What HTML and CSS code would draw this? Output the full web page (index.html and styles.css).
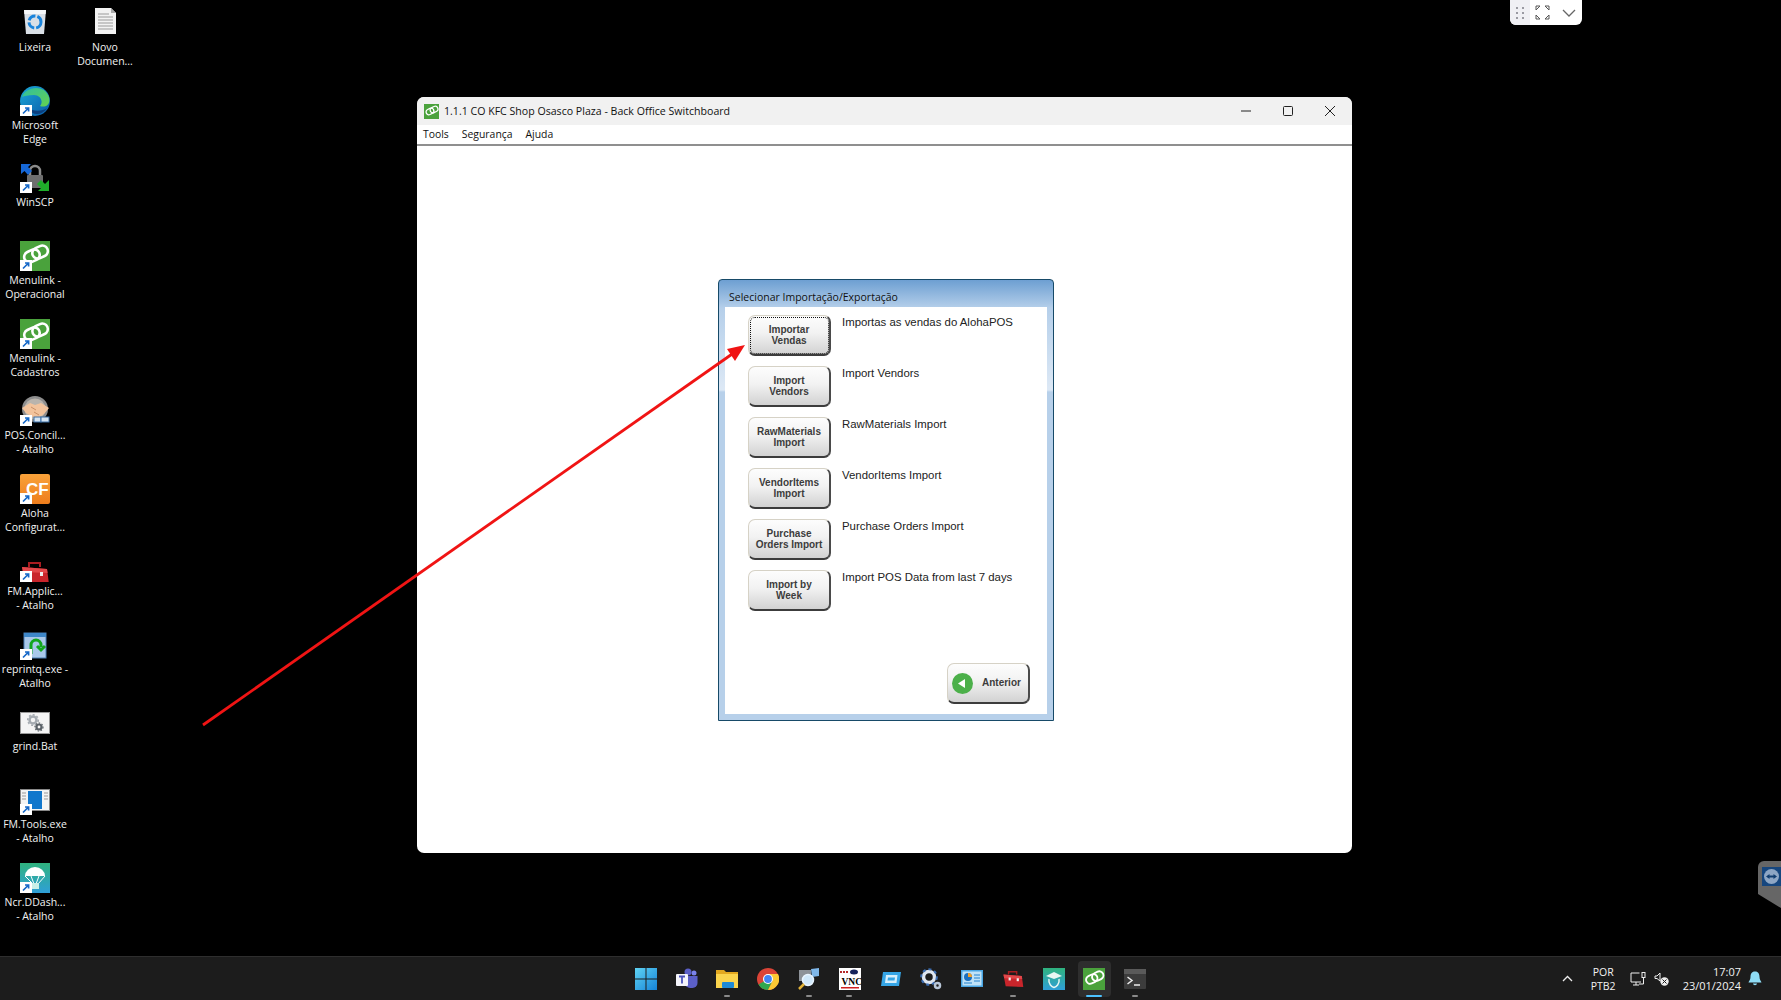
FILE: index.html
```html
<!DOCTYPE html>
<html lang="pt-BR">
<head>
    <meta charset="UTF-8">
    <title>Back Office Switchboard</title>
    <link rel="stylesheet" href="styles.css">
</head>
<body>
    <svg class="defs" width="0" height="0">
        <defs>
            <linearGradient id="edgeBlue" x1="0" y1="0" x2="1" y2="1"><stop offset="0" stop-color="#1aa7d8"/><stop offset="1" stop-color="#0a5aa8"/></linearGradient>
            <linearGradient id="edgeGreen" x1="0" y1="0" x2="1" y2="1"><stop offset="0" stop-color="#2fbfa0"/><stop offset="1" stop-color="#66d24e"/></linearGradient>
            <linearGradient id="cfOrange" x1="0" y1="0" x2="0" y2="1"><stop offset="0" stop-color="#f9a23a"/><stop offset="1" stop-color="#ee7d1c"/></linearGradient>
            <linearGradient id="tealBlue" x1="0" y1="0" x2="0" y2="1"><stop offset="0" stop-color="#2fb37e"/><stop offset="1" stop-color="#2f9fd8"/></linearGradient>
            <linearGradient id="startBlue" x1="0" y1="0" x2="1" y2="1"><stop offset="0" stop-color="#5fd3f3"/><stop offset="1" stop-color="#1583d8"/></linearGradient>

            <symbol id="badge" viewBox="0 0 30 30">
                <rect x="0" y="19" width="12" height="11" fill="#fff"/>
                <path d="M3 27.5 L8 22.5 M5 22 H8.6 V25.6" fill="none" stroke="#1668c8" stroke-width="1.7"/>
            </symbol>
            <symbol id="ring-link" viewBox="0 0 30 30">
                <rect width="30" height="30" fill="#4aa23c"/>
                <g fill="none" stroke="#fff" stroke-width="2.6" transform="rotate(-25 16 13)">
                    <rect x="3.500" y="7.500" width="16" height="11" rx="5.500"/>
                    <rect x="12.500" y="7.500" width="16" height="11" rx="5.500"/>
                </g>
            </symbol>
            <symbol id="toolbox" viewBox="0 0 30 30">
                <path d="M9 9 V5 H20 V9" fill="none" stroke="#a81c20" stroke-width="2"/>
                <path d="M2 9 L27 11 L29 26 L5 25 Z" fill="#c9252b"/>
                <path d="M2 9 L27 11 L27.6 15 L3 14 Z" fill="#e2474a"/>
                <rect x="9" y="13" width="3" height="4" fill="#eee"/>
                <rect x="20" y="14" width="3" height="4" fill="#eee"/>
            </symbol>
        </defs>
    </svg>

    <div class="desktop">
        <div class="icon-grid">
            <div class="shortcut">
                <svg class="shortcut-img" viewBox="0 0 30 30">
                    <path d="M4 2 H26 L24 26 H6 Z" fill="#d9dfe6"/>
                    <path d="M4 2 H26 L25.6 6 H4.4 Z" fill="#f5f7f9"/>
                    <circle cx="15" cy="14" r="6" fill="none" stroke="#1a84dc" stroke-width="3" stroke-dasharray="8 2"/>
                </svg>
                <span>Lixeira</span>
            </div>
            <div class="shortcut second-col">
                <svg class="shortcut-img" viewBox="0 0 30 30">
                    <path d="M5 0 H21 L26 5 V26 H5 Z" fill="#f2f2f2"/>
                    <path d="M21 0 V5 H26 Z" fill="#aaa"/>
                    <path d="M8 6 H19 M8 9 H23 M8 12 H23 M8 15 H23 M8 18 H23 M8 21 H23" stroke="#9a9a9a" stroke-width="1"/>
                </svg>
                <span>Novo<br>Documen...</span>
            </div>
            <div class="shortcut">
                <svg class="shortcut-img" viewBox="0 0 30 30">
                    <circle cx="15" cy="15" r="15" fill="url(#edgeBlue)"/>
                    <path d="M2 11 C5 1 24 -3 29 11 C31 19 25 22 20 20 C24 15 20 9 14 9 C8 9 4 10 2 11 Z" fill="url(#edgeGreen)"/>
                    <path d="M8 22 C12 25 22 26 27 22 C22 30 12 30 8 22 Z" fill="#0c3f7d"/>
                    <use href="#badge" width="30" height="30"/>
                </svg>
                <span>Microsoft<br>Edge</span>
            </div>
            <div class="shortcut">
                <svg class="shortcut-img" viewBox="0 0 30 30">
                    <path d="M10 13 V8 a5 5 0 0 1 10 0 V13" fill="none" stroke="#8b8b8b" stroke-width="2.5"/>
                    <rect x="7" y="12" width="16" height="13" rx="1" fill="#6e6e6e"/>
                    <path d="M1 11 V1 H11 L8 4 L12 8 L8 12 L4.500 8 Z" fill="#1668d8"/>
                    <path d="M29 17 V28 H18 L21 25 L17 21 L21 17 L25 21 Z" fill="#1fae2a"/>
                    <use href="#badge" width="30" height="30"/>
                </svg>
                <span>WinSCP</span>
            </div>
            <div class="shortcut">
                <svg class="shortcut-img" viewBox="0 0 30 30"><use href="#ring-link" width="30" height="30"/><use href="#badge" width="30" height="30"/></svg>
                <span>Menulink -<br>Operacional</span>
            </div>
            <div class="shortcut">
                <svg class="shortcut-img" viewBox="0 0 30 30"><use href="#ring-link" width="30" height="30"/><use href="#badge" width="30" height="30"/></svg>
                <span>Menulink -<br>Cadastros</span>
            </div>
            <div class="shortcut">
                <svg class="shortcut-img" viewBox="0 0 30 30">
                    <circle cx="15" cy="13" r="13" fill="#8d8d8d"/>
                    <circle cx="15" cy="13" r="10.500" fill="#b9b4ad"/>
                    <path d="M2 12 L10 7 L15 9 L21 7 L29 12 L24 18 L17 23 L13 21 L6 17 Z" fill="#f2c39c"/>
                    <path d="M11 11 L16 14 M14 16 L19 19" stroke="#c98f66" stroke-width="1"/>
                    <rect x="14" y="21" width="7" height="5" fill="#d5e4f2" stroke="#3a6ea5"/>
                    <rect x="21" y="21" width="8" height="5" fill="#d5e4f2" stroke="#3a6ea5"/>
                    <use href="#badge" width="30" height="30"/>
                </svg>
                <span>POS.Concil...<br>- Atalho</span>
            </div>
            <div class="shortcut">
                <svg class="shortcut-img" viewBox="0 0 30 30">
                    <rect width="30" height="30" rx="2" fill="url(#cfOrange)"/>
                    <text class="cf-text" x="6" y="21">CF</text>
                    <use href="#badge" width="30" height="30"/>
                </svg>
                <span>Aloha<br>Configurat...</span>
            </div>
            <div class="shortcut">
                <svg class="shortcut-img" viewBox="0 0 30 30">
                    <use href="#toolbox" y="6" width="30" height="30"/>
                    <rect x="0" y="19" width="12" height="11" fill="#000"/>
                    <use href="#badge" width="30" height="30"/>
                </svg>
                <span>FM.Applic...<br>- Atalho</span>
            </div>
            <div class="shortcut">
                <svg class="shortcut-img" viewBox="0 0 30 30">
                    <rect x="4" y="3" width="22" height="25" fill="#a9c8ea" stroke="#4a7fb5"/>
                    <rect x="4" y="3" width="22" height="4" fill="#3e87c9"/>
                    <path d="M11 24 V15 a5 5 0 0 1 10 0 V17 M17 16 L21 20 L25 16" fill="none" stroke="#13a61f" stroke-width="3"/>
                    <use href="#badge" width="30" height="30"/>
                </svg>
                <span>reprintq.exe -<br>Atalho</span>
            </div>
            <div class="shortcut">
                <svg class="shortcut-img" viewBox="0 0 30 30">
                    <rect x="0.500" y="5.500" width="29" height="21" fill="#f4f4f4" stroke="#999"/>
                    <circle cx="13" cy="13" r="3.500" fill="none" stroke="#a5abb1" stroke-width="2.500"/>
                    <circle cx="13" cy="13" r="5.300" fill="none" stroke="#a5abb1" stroke-width="1.500" stroke-dasharray="2 2"/>
                    <circle cx="19" cy="20" r="2.500" fill="none" stroke="#5b6268" stroke-width="2.200"/>
                    <circle cx="19" cy="20" r="4" fill="none" stroke="#5b6268" stroke-width="1.200" stroke-dasharray="1.500 1.500"/>
                </svg>
                <span>grind.Bat</span>
            </div>
            <div class="shortcut">
                <svg class="shortcut-img" viewBox="0 0 30 30">
                    <rect x="0.500" y="4.500" width="29" height="21" fill="#f4f4f4" stroke="#888"/>
                    <rect x="8" y="6" width="14" height="18" fill="#1177cc"/>
                    <path d="M2 8 H6 M2 11 H6 M2 14 H6 M24 8 H28 M24 11 H28 M24 14 H28" stroke="#999"/>
                    <use href="#badge" width="30" height="30"/>
                </svg>
                <span>FM.Tools.exe<br>- Atalho</span>
            </div>
            <div class="shortcut">
                <svg class="shortcut-img" viewBox="0 0 30 30">
                    <rect width="30" height="30" fill="url(#tealBlue)"/>
                    <path d="M5 13 a10 9 0 0 1 20 0 Z" fill="#fff"/>
                    <path d="M5 13 L13 21 M25 13 L18 21 M11 13 L14 21 M19 13 L16 21" stroke="#fff"/>
                    <rect x="12" y="20" width="7" height="6" fill="#c9f0e8"/>
                    <use href="#badge" width="30" height="30"/>
                </svg>
                <span>Ncr.DDash...<br>- Atalho</span>
            </div>
        </div>

        <div class="window">
            <div class="title-bar">
                <svg class="app-icon" viewBox="0 0 30 30"><use href="#ring-link" width="30" height="30"/></svg>
                <span class="title-text">1.1.1 CO KFC Shop Osasco Plaza - Back Office Switchboard</span>
                <div class="win-controls">
                    <svg width="42" height="14" viewBox="0 0 42 14"><path d="M16 7 H26" stroke="#222"/></svg>
                    <svg width="42" height="14" viewBox="0 0 42 14"><rect x="16.500" y="2.500" width="9" height="9" rx="1" fill="none" stroke="#222"/></svg>
                    <svg width="42" height="14" viewBox="0 0 42 14"><path d="M16 2 L26 12 M26 2 L16 12" stroke="#222"/></svg>
                </div>
            </div>
            <div class="menu-bar">
                <span>Tools</span>
                <span>Segurança</span>
                <span>Ajuda</span>
            </div>
            <div class="client">
                <div class="panel">
                    <div class="panel-title">Selecionar Importação/Exportação</div>
                    <div class="panel-body">
                        <div class="rows">
                            <div class="row">
                                <button class="btn btn-focus">Importar<br>Vendas</button>
                                <span class="row-label">Importas as vendas do AlohaPOS</span>
                            </div>
                            <div class="row">
                                <button class="btn">Import<br>Vendors</button>
                                <span class="row-label">Import Vendors</span>
                            </div>
                            <div class="row">
                                <button class="btn">RawMaterials<br>Import</button>
                                <span class="row-label">RawMaterials Import</span>
                            </div>
                            <div class="row">
                                <button class="btn">VendorItems<br>Import</button>
                                <span class="row-label">VendorItems Import</span>
                            </div>
                            <div class="row">
                                <button class="btn">Purchase<br>Orders Import</button>
                                <span class="row-label">Purchase Orders Import</span>
                            </div>
                            <div class="row">
                                <button class="btn">Import by<br>Week</button>
                                <span class="row-label">Import POS Data from last 7 days</span>
                            </div>
                        </div>
                        <div class="panel-footer">
                            <button class="btn btn-back">
                                <svg width="21" height="21" viewBox="0 0 21 21"><circle cx="10.500" cy="10.500" r="10.500" fill="#4cb04a"/><path d="M6 10.500 L13 6 V15 Z" fill="#fff"/></svg>
                                <span>Anterior</span>
                            </button>
                        </div>
                    </div>
                </div>
            </div>
        </div>

        <div class="remote-pill">
            <div class="pill-grip">
                <svg width="10" height="14" viewBox="0 0 10 14"><path d="M1 1 h2 v2 h-2 Z M7 1 h2 v2 h-2 Z M1 6 h2 v2 h-2 Z M7 6 h2 v2 h-2 Z M1 11 h2 v2 h-2 Z M7 11 h2 v2 h-2 Z" fill="#9a9aa2"/></svg>
            </div>
            <svg width="15" height="15" viewBox="0 0 15 15"><path d="M1 5 V1 H5 L1 5 M14 5 V1 H10 L14 5 M1 10 V14 H5 L1 10 M14 10 V14 H10 L14 10" fill="none" stroke="#555"/></svg>
            <svg class="pill-chevron" width="14" height="8" viewBox="0 0 14 8"><path d="M1 1 L7 7 L13 1" fill="none" stroke="#666" stroke-width="1.300"/></svg>
        </div>

        <div class="tv-tab">
            <svg width="19" height="19" viewBox="0 0 19 19">
                <rect width="19" height="19" fill="#16467e"/>
                <circle cx="9.500" cy="9.500" r="7.500" fill="#8ea6c4"/>
                <path d="M4 9.500 L7.500 7 V8.500 H11.500 V7 L15 9.500 L11.500 12 V10.500 H7.500 V12 Z" fill="#123e70"/>
            </svg>
        </div>
    </div>

    <div class="taskbar">
        <div class="task-side"></div>
        <div class="task-apps">
            <div class="task-item">
                <svg class="task-icon" viewBox="0 0 22 22"><path d="M0 0 H10.500 V10.500 H0 Z M11.500 0 H22 V10.500 H11.500 Z M0 11.500 H10.500 V22 H0 Z M11.500 11.500 H22 V22 H11.500 Z" fill="url(#startBlue)"/></svg>
            </div>
            <div class="task-item">
                <svg class="task-icon" viewBox="0 0 22 22">
                    <circle cx="18" cy="5" r="2.500" fill="#7b83eb"/><circle cx="12" cy="4" r="3.500" fill="#5b5fc7"/>
                    <path d="M9 8 H21.500 V15 a5 5 0 0 1 -5 5 H14 a5 5 0 0 1 -5 -5 Z" fill="#5b5fc7"/>
                    <rect x="0" y="6" width="12" height="12" rx="1" fill="#f4f4fa"/>
                    <path d="M3 8.500 H9 M6 8.500 V15.500" stroke="#4b53bc" stroke-width="1.800"/>
                </svg>
            </div>
            <div class="task-item is-open">
                <svg class="task-icon" viewBox="0 0 22 22">
                    <path d="M0 2 H8 L10 4 H22 V20 H0 Z" fill="#e3a81f"/>
                    <path d="M0 6 H22 V20 H0 Z" fill="#fbd44d"/>
                    <rect x="6" y="14" width="12" height="6" rx="1" fill="#1e8ad6"/>
                </svg>
            </div>
            <div class="task-item">
                <svg class="task-icon" viewBox="0 0 22 22">
                    <circle cx="11" cy="11" r="11" fill="#db4437"/>
                    <path d="M11 11 L1.500 16.500 A11 11 0 0 0 11 22 L16.500 11 Z" fill="#2fa84f"/>
                    <path d="M11 6 H21 A11 11 0 0 1 11 22 L15.500 13 Z" fill="#fcc934"/>
                    <circle cx="11" cy="11" r="5" fill="#fff"/><circle cx="11" cy="11" r="3.900" fill="#4285f4"/>
                </svg>
            </div>
            <div class="task-item is-open">
                <svg class="task-icon" viewBox="0 0 22 22">
                    <rect x="1" y="2" width="12" height="11" fill="#8d9299"/>
                    <path d="M13 1 L21 0 V8 L14 9 Z" fill="#7fb8ea"/>
                    <circle cx="10" cy="12" r="5.500" fill="#cfe8fb" stroke="#e8f4ff" stroke-width="1.500"/>
                    <path d="M6 16 L1 21" stroke="#e2b33a" stroke-width="2.500"/>
                </svg>
            </div>
            <div class="task-item is-open">
                <svg class="task-icon" viewBox="0 0 22 22">
                    <rect width="22" height="22" fill="#fff"/>
                    <ellipse cx="15" cy="4" rx="4" ry="2.500" fill="#16245c"/>
                    <path d="M1 4 H10" stroke="#b52a2a" stroke-width="2" stroke-dasharray="2 1"/>
                    <text class="vnc-text" x="2.500" y="17">VNC</text>
                    <rect x="2" y="19" width="18" height="1.500" fill="#d02020"/>
                </svg>
            </div>
            <div class="task-item">
                <svg class="task-icon" viewBox="0 0 22 22">
                    <path d="M3 4 H21 L19 18 H1 Z" fill="#35a5e6"/>
                    <path d="M6 7 H17.500 L16.500 15 H5 Z" fill="#d6effc"/>
                    <path d="M8 9.500 H15 L14.500 12.500 H7.500 Z" fill="#35a5e6"/>
                </svg>
            </div>
            <div class="task-item">
                <svg class="task-icon" viewBox="0 0 22 22">
                    <circle cx="9" cy="9" r="5.500" fill="none" stroke="#dfe6f0" stroke-width="3.500"/>
                    <circle cx="9" cy="9" r="7.800" fill="none" stroke="#3d6fb5" stroke-width="2" stroke-dasharray="3 3"/>
                    <circle cx="17.500" cy="17.500" r="2.500" fill="none" stroke="#b9c7d8" stroke-width="2.500"/>
                </svg>
            </div>
            <div class="task-item">
                <svg class="task-icon" viewBox="0 0 22 22">
                    <rect y="2" width="22" height="17" fill="#49a6e4"/>
                    <rect x="1.500" y="3.500" width="19" height="14" fill="#bfe2f7"/>
                    <circle cx="7" cy="9" r="4" fill="#1b6fbe"/>
                    <path d="M7 9 V5 A4 4 0 0 1 11 9 Z" fill="#f3a02a"/>
                    <path d="M3 15 H11 M13 7 H19 M13 10 H19 M13 13 H19" stroke="#2280cc"/>
                </svg>
            </div>
            <div class="task-item is-open">
                <svg class="task-icon" viewBox="0 0 30 30"><use href="#toolbox" width="30" height="30"/></svg>
            </div>
            <div class="task-item">
                <svg class="task-icon" viewBox="0 0 22 22">
                    <rect width="22" height="22" fill="url(#tealBlue)"/>
                    <path d="M3 8 L11 4 L19 8 L11 11 Z" fill="#e8f7f2"/>
                    <path d="M6 11 C5 16 9 19 11 19.500 C13 19 17 16 16 11" fill="none" stroke="#e8f7f2" stroke-width="1.500"/>
                </svg>
            </div>
            <div class="task-item is-active">
                <svg class="task-icon" viewBox="0 0 30 30"><use href="#ring-link" width="30" height="30"/></svg>
            </div>
            <div class="task-item is-open">
                <svg class="task-icon" viewBox="0 0 22 22">
                    <rect y="1" width="22" height="20" rx="1" fill="#3c3c3c"/>
                    <rect y="1" width="22" height="5" fill="#5a5a5a"/>
                    <path d="M3.500 9 L8 12.500 L3.500 16" fill="none" stroke="#eee" stroke-width="1.500"/>
                    <path d="M10 17 H16" stroke="#eee" stroke-width="1.500"/>
                </svg>
            </div>
        </div>
        <div class="task-side task-tray">
            <svg class="tray-chevron" width="11" height="7" viewBox="0 0 11 7"><path d="M1 6 L5.500 1.500 L10 6" fill="none" stroke="#eee" stroke-width="1.300"/></svg>
            <div class="tray-lang">POR<br>PTB2</div>
            <svg class="tray-net" width="16" height="16" viewBox="0 0 16 16"><path d="M9.500 2 H1 V11 H11 M3 14 H9 M6 11 V14" fill="none" stroke="#eee"/><rect x="12" y="1.500" width="3" height="5" fill="none" stroke="#eee"/><path d="M13.500 7 V13 H9" fill="none" stroke="#eee"/></svg>
            <svg class="tray-sound" width="15" height="14" viewBox="0 0 15 14"><path d="M1 4 H3 L6 1 V9 L3 6.500 H1 Z" fill="none" stroke="#eee"/><circle cx="10.500" cy="9.500" r="4.200" fill="#eee"/><path d="M8.500 7.500 L12.500 11.500 M12.500 7.500 L8.500 11.500" stroke="#1c1c1c"/></svg>
            <div class="tray-clock">17:07<br>23/01/2024</div>
            <svg class="tray-bell" width="14" height="15" viewBox="0 0 14 15"><path d="M7 0.500 C3.500 0.500 2.500 3 2.500 6 C2.500 8.500 1 10 0.500 11.500 H13.500 C13 10 11.500 8.500 11.500 6 C11.500 3 10.500 0.500 7 0.500 Z M5 12.500 H9 C8.800 14.800 5.200 14.800 5 12.500 Z" fill="#8fdcf5"/></svg>
        </div>
    </div>

    <svg class="arrow" viewBox="0 0 1781 1000">
        <path d="M203 725 L735 352" stroke="#f01414" stroke-width="2.800"/>
        <path d="M745 345 L735 361 L727 349 Z" fill="#f01414"/>
    </svg>
</body>
</html>
```

FILE: styles.css
```css
html, body {
    margin: 0;
    padding: 0;
    height: 100%;
}
body {
    position: relative;
    width: 1781px;
    height: 1000px;
    overflow: hidden;
    background: #000;
    display: flex;
    flex-direction: column;
    font-family: "Open Sans", "Noto Sans", sans-serif;
}
.defs {
    position: absolute;
}
.desktop {
    position: relative;
    flex: 1;
}
.arrow {
    position: absolute;
    left: 0;
    top: 0;
    width: 1781px;
    height: 1000px;
    pointer-events: none;
}

/* desktop shortcuts */
.icon-grid {
    display: grid;
    grid-template-rows: repeat(12, 77.7px);
    grid-template-columns: 70px 70px;
    grid-auto-flow: column;
    padding-top: 8px;
}
.shortcut {
    display: flex;
    flex-direction: column;
    align-items: center;
    color: #f2f2f2;
    font-size: 10.5px;
    line-height: 14px;
    text-align: center;
    grid-column: 1;
}
.shortcut span {
    margin-top: 2px;
    white-space: nowrap;
}
.second-col {
    grid-column: 2;
    grid-row: 1;
}
.shortcut-img {
    width: 30px;
    height: 30px;
    flex: none;
}
.cf-text {
    font-family: "Liberation Sans", sans-serif;
    font-size: 17px;
    font-weight: bold;
    fill: #fff;
}

/* main window */
.window {
    position: absolute;
    left: 417px;
    top: 97px;
    width: 935px;
    height: 756px;
    background: #fff;
    border-radius: 7px;
    overflow: hidden;
    display: flex;
    flex-direction: column;
}
.title-bar {
    height: 28px;
    background: #f1f1f1;
    display: flex;
    align-items: center;
    padding-left: 7px;
    flex: none;
}
.app-icon {
    width: 15px;
    height: 15px;
    margin-right: 5px;
}
.title-text {
    font-size: 10.6px;
    color: #111;
    flex: 1;
}
.win-controls {
    display: flex;
    padding-right: 1px;
}
.menu-bar {
    height: 21px;
    flex: none;
    box-sizing: border-box;
    border-bottom: 2px solid #8f8f8f;
    display: flex;
    align-items: center;
    gap: 13px;
    padding: 0 0 1px 6px;
    font-size: 10.4px;
    color: #111;
}
.client {
    flex: 1;
    margin: 0 2px 2px;
    display: flex;
    justify-content: center;
    padding: 133px 0 0 3px;
}

/* import panel */
.panel {
    width: 336px;
    height: 442px;
    box-sizing: border-box;
    border: 1px solid #174a68;
    border-radius: 4px 4px 0 0;
    background: linear-gradient(#6d9fd2 0, #b5cfea 28px, #dce8f5 108px, #dce8f5 110px, #b7d0ea 112px);
    display: flex;
    flex-direction: column;
    padding: 0 6px 6px;
}
.panel-title {
    height: 27px;
    flex: none;
    font-size: 10.5px;
    line-height: 34px;
    color: #111;
    padding-left: 4px;
    white-space: nowrap;
}
.panel-body {
    flex: 1;
    background: #fff;
    display: flex;
    flex-direction: column;
    justify-content: space-between;
    padding: 8px 17px 10px 23px;
}
.rows {
    display: flex;
    flex-direction: column;
    gap: 10px;
}
.row {
    display: flex;
    gap: 11px;
}
.row-label {
    font-family: "Liberation Sans", Arial, sans-serif;
    font-size: 11.4px;
    line-height: 14px;
    color: #222;
    white-space: nowrap;
}
.btn {
    width: 83px;
    height: 41px;
    box-sizing: border-box;
    padding: 0;
    border: 1px solid #d6d2c6;
    border-right: 2px solid #4a4a4a;
    border-bottom: 2px solid #3c3c3c;
    border-radius: 7px;
    background: linear-gradient(#fdfdfd, #f2f2f2 45%, #d2d2d2);
    font-family: "Liberation Sans", Arial, sans-serif;
    font-size: 10px;
    font-weight: bold;
    line-height: 11.5px;
    color: #3c3c3c;
    text-align: center;
}
.btn-focus {
    outline: 1px dotted #111;
    outline-offset: -3px;
}
.panel-footer {
    display: flex;
    justify-content: flex-end;
}
.btn-back {
    display: flex;
    align-items: center;
    padding-left: 4px;
    gap: 9px;
}

/* floating bits */
.remote-pill {
    position: absolute;
    left: 1510px;
    top: 0;
    width: 72px;
    height: 25px;
    background: #fff;
    border-radius: 0 0 6px 6px;
    overflow: hidden;
    display: flex;
    align-items: center;
}
.pill-grip {
    width: 20px;
    height: 100%;
    background: #f0f0f4;
    display: flex;
    align-items: center;
    justify-content: center;
    margin-right: 5px;
}
.pill-chevron {
    margin-left: 12px;
}
.tv-tab {
    position: absolute;
    left: 1758px;
    top: 861px;
    width: 23px;
    height: 47px;
    box-sizing: border-box;
    padding: 6px 0 0 4px;
    background: #666;
    border-radius: 6px 0 0 0;
    clip-path: polygon(0 0, 100% 0, 100% 100%, 0 70%);
}

/* taskbar */
.taskbar {
    height: 44px;
    flex: none;
    box-sizing: border-box;
    background: #1c1c1c;
    border-top: 1px solid #2e2e2e;
    display: flex;
}
.task-side {
    flex: 1;
}
.task-apps {
    display: flex;
}
.task-item {
    position: relative;
    width: 40.8px;
    display: flex;
    align-items: center;
    justify-content: center;
}
.task-icon {
    width: 22px;
    height: 22px;
}
.task-item.is-open::after {
    content: "";
    position: absolute;
    left: 17px;
    bottom: 3px;
    width: 6px;
    height: 2px;
    border-radius: 1px;
    background: #8a8a8a;
}
.task-item.is-active::before {
    content: "";
    position: absolute;
    inset: 4px 4px 3px;
    border-radius: 4px;
    background: #2e2e2e;
}
.task-item.is-active .task-icon {
    position: relative;
}
.task-item.is-active::after {
    content: "";
    position: absolute;
    left: 12px;
    bottom: 3px;
    width: 16px;
    height: 2.5px;
    border-radius: 1px;
    background: #4cc2ff;
}
.task-tray {
    display: flex;
    align-items: center;
    justify-content: flex-end;
    color: #f2f2f2;
    font-size: 10.5px;
    line-height: 14px;
}
.vnc-text {
    font-family: "Liberation Serif", serif;
    font-size: 9.5px;
    font-weight: bold;
    fill: #000;
}
.tray-chevron {
    margin-right: 18px;
}
.tray-lang {
    text-align: center;
    margin-right: 14px;
}
.tray-net {
    margin-right: 8px;
}
.tray-clock {
    font-size: 11px;
    text-align: right;
    margin-left: 14px;
    margin-right: 7px;
}
.tray-bell {
    margin-right: 19px;
}
```
